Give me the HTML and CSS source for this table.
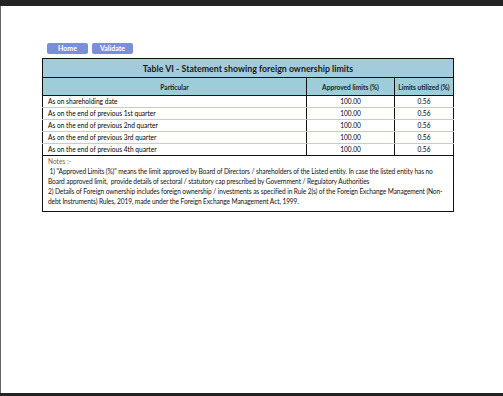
FILE: index.html
```html
<!DOCTYPE html>
<html>
<head>
<meta charset="utf-8">
<link rel="stylesheet" href="styles.css">
</head>
<body>
<div class="topbar"></div>
<div class="page">
  <div class="content">
    <div class="buttons">
      <button class="btn">Home</button>
      <button class="btn btn-validate">Validate</button>
    </div>
    <table class="grid">
      <tr><th colspan="3" class="title">Table VI - Statement showing foreign ownership limits</th></tr>
      <tr class="head">
        <th class="c1">Particular</th>
        <th class="c2">Approved limits (%)</th>
        <th class="c3">Limits utilized (%)</th>
      </tr>
      <tr class="row"><td class="c1">As on shareholding date</td><td class="c2">100.00</td><td class="c3">0.56</td></tr>
      <tr class="row"><td class="c1">As on the end of previous 1st quarter</td><td class="c2">100.00</td><td class="c3">0.56</td></tr>
      <tr class="row"><td class="c1">As on the end of previous 2nd quarter</td><td class="c2">100.00</td><td class="c3">0.56</td></tr>
      <tr class="row"><td class="c1">As on the end of previous 3rd quarter</td><td class="c2">100.00</td><td class="c3">0.56</td></tr>
      <tr class="row last"><td class="c1">As on the end of previous 4th quarter</td><td class="c2">100.00</td><td class="c3">0.56</td></tr>
      <tr class="notes"><td colspan="3">
        <div class="notes-label">Notes :-</div>
        <div class="notes-text">&nbsp;1) "Approved Limits (%)" means the limit approved by Board of Directors / shareholders of the Listed entity. In case the listed entity has no<br>Board approved limit,&nbsp; provide details of sectoral / statutory cap prescribed by Government / Regulatory Authorities<br>2) Details of Foreign ownership includes foreign ownership / investments as specified in Rule 2(s) of the Foreign Exchange Management (Non-debt Instruments) Rules, 2019, made under the Foreign Exchange Management Act, 1999.</div>
      </td></tr>
    </table>
  </div>
</div>
<div class="bottombar"></div>
</body>
</html>
```
FILE: styles.css
```css
html, body {
  margin: 0;
  padding: 0;
  background: #fff;
}
body {
  width: 503px;
  height: 396px;
  display: flex;
  flex-direction: column;
  overflow: hidden;
  font-family: Lato, "Liberation Sans", sans-serif;
}
.topbar {
  height: 6px;
  background: #232323;
  flex: none;
}
.bottombar {
  height: 3px;
  background: #232323;
  flex: none;
}
.page {
  flex: 1;
  border-left: 1px solid #666;
  background: #fff;
}
.content {
  padding: 37px 0 0 41px;
}
.buttons {
  display: flex;
  gap: 4px;
  padding-left: 5px;
  margin-bottom: 4px;
}
.btn {
  width: 41px;
  height: 11px;
  padding: 0;
  border: none;
  border-radius: 2px;
  background: #7b8fd8;
  color: #fff;
  font-family: Lato, "Liberation Sans", sans-serif;
  font-weight: bold;
  font-size: 7px;
  line-height: 11px;
}
.grid {
  width: 412px;
  border-collapse: collapse;
  border: 1.5px solid #111;
  font-size: 6.6px;
  color: #000;
}
.title {
  height: 18px;
  background: #a4cbdc;
  font-size: 8.8px;
  font-weight: bold;
  color: #1a1a1a;
  padding: 0;
  border-bottom: 1.5px solid #111;
}
.head th {
  height: 17px;
  background: #9ccdd8;
  font-size: 6.6px;
  font-weight: bold;
  color: #222;
  padding: 0;
  border-bottom: 1.5px solid #111;
}
.c1 { width: 258px; text-align: left; }
.head .c1 { text-align: center; }
.c2 { width: 87px; text-align: center; border-left: 1px solid #111; border-right: 1px solid #111; }
.c3 { text-align: center; }
.row td {
  height: 10px;
  padding: 0 0 1px 5px;
  border-bottom: 1px solid #c9c6ec;
  line-height: 10px;
}
.row td.c2, .row td.c3 { padding: 0 0 1px 0; }
.row.last td { border-bottom: 1.5px solid #111; }
.notes td {
  padding: 1px 1px 5px 5px;
  vertical-align: top;
}
.notes-label {
  color: #8a6a00;
  font-size: 6.6px;
  line-height: 9px;
}
.notes-text {
  font-size: 6.6px;
  line-height: 10px;
  letter-spacing: -0.1px;
  color: #111;
}
```
